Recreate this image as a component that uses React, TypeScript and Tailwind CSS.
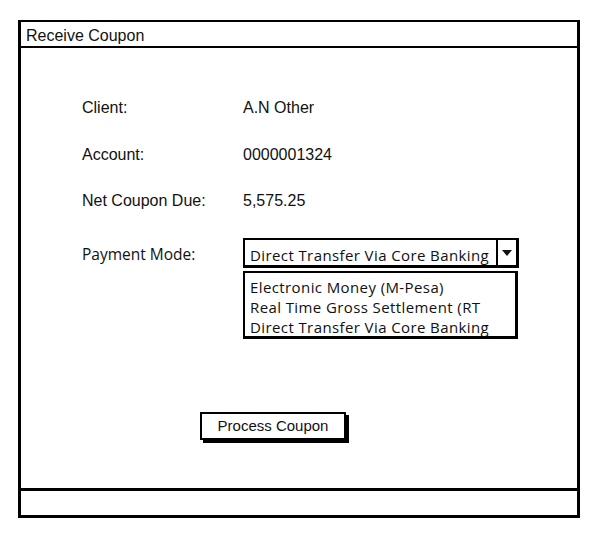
import React from "react";

const arial = { fontFamily: '"Liberation Sans", Arial, sans-serif' };

export default function App() {
  return (
    <div className="pt-[20px] pl-[18px] bg-white min-h-[534px]">
      <div className="w-[562px] h-[498px] border-[3px] border-t-2 border-black flex flex-col text-[#111]">
        <div className="h-[26px] border-b-2 border-black flex items-center pl-[5px] pt-[4px] text-[16px] font-['Liberation_Sans',Arial,sans-serif]">
          Receive Coupon
        </div>
        <div className="flex-1 pl-[61px] pt-[50px] flex flex-col font-['Liberation_Sans',Arial,sans-serif] text-[16px]">
          <div className="flex h-[20px] leading-[20px]">
            <div className="w-[161px]">Client:</div>
            <div>A.N Other</div>
          </div>
          <div className="flex h-[20px] leading-[20px] mt-[27px]">
            <div className="w-[161px]">Account:</div>
            <div>0000001324</div>
          </div>
          <div className="flex h-[20px] leading-[20px] mt-[26px]">
            <div className="w-[161px]">Net Coupon Due:</div>
            <div>5,575.25</div>
          </div>
          <div className="flex mt-[27px] font-['Open_Sans',sans-serif]">
            <div className="w-[161px] pt-[5px] text-[15.5px] leading-[22px]">Payment Mode:</div>
            <div className="flex flex-col">
              <div className="w-[276px] h-[30px] border-2 border-r-[3px] border-b-[3px] border-black flex">
                <div className="flex-1 pl-[5px] pt-[3px] text-[15px] tracking-[0.4px] leading-[24px] whitespace-nowrap overflow-hidden">
                  Direct Transfer Via Core Banking
                </div>
                <div className="w-[20px] border-l-2 border-black flex items-center justify-center">
                  <svg width="10" height="6" viewBox="0 0 10 6">
                    <path d="M0 0 L10 0 L5 6 Z" fill="#111" />
                  </svg>
                </div>
              </div>
              <div className="w-[275px] h-[68px] mt-[3px] border-2 border-r-[3px] border-b-[3px] border-black pl-[5px] pt-[4px] text-[15px] tracking-[0.4px] leading-[20px] whitespace-nowrap overflow-hidden">
                <div>Electronic Money (M-Pesa)</div>
                <div>Real Time Gross Settlement (RT</div>
                <div>Direct Transfer Via Core Banking</div>
              </div>
            </div>
          </div>
          <div className="mt-[73px] ml-[118px]">
            <div
              className="w-[146px] h-[28px] border-2 border-black shadow-[3px_3px_0_0_#000] flex items-center justify-center text-[15px] bg-white"
              style={arial}
            >
              Process Coupon
            </div>
          </div>
        </div>
        <div className="h-[27px] border-t-[3px] border-black" />
      </div>
    </div>
  );
}
